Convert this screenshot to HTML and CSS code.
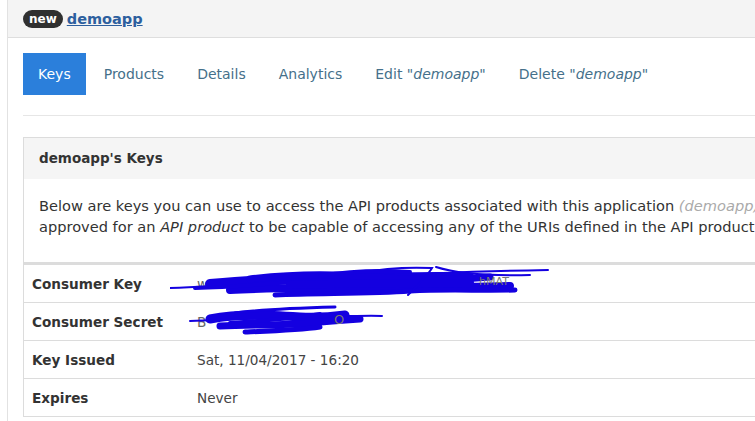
FILE: index.html
```html
<!DOCTYPE html>
<html>
<head>
<meta charset="utf-8">
<link rel="stylesheet" href="styles.css">
</head>
<body>
<div class="page">
  <div class="header">
    <span class="badge">new</span>
    <a class="title" href="#">demoapp</a>
  </div>
  <div class="content">
    <ul class="tabs">
      <li class="tab active">Keys</li>
      <li class="tab">Products</li>
      <li class="tab">Details</li>
      <li class="tab">Analytics</li>
      <li class="tab">Edit "<em>demoapp</em>"</li>
      <li class="tab">Delete "<em>demoapp</em>"</li>
    </ul>
    <div class="rule"></div>
    <div class="panel">
      <div class="panel-head">demoapp's Keys</div>
      <p class="panel-body">Below are keys you can use to access the API products associated with this application <em class="muted">(demoapp)</em>. The keys must be<br>approved for an <em>API product</em> to be capable of accessing any of the URIs defined in the API product.</p>
    </div>
    <table class="keys">
      <tr>
        <th>Consumer Key</th>
        <td class="secret">
          <span class="val">w</span>
          <svg class="scribble" width="380" height="36" viewBox="0 0 380 36">
            <g fill="none" stroke="#1400e0" stroke-linecap="round">
              <path d="M0 23 C60 21 140 16 200 12 S320 6 378 5" stroke-width="2"/>
              <path d="M40 19 C90 15 140 11 190 12 C230 14 270 10 300 13" stroke-width="10"/>
              <path d="M60 25 C110 22 160 24 210 22 C250 20 280 23 340 21" stroke-width="8"/>
              <path d="M80 14 C130 8 170 9 220 13 C250 16 280 15 320 12" stroke-width="7"/>
              <path d="M105 30 C150 28 200 29 240 26 C280 24 310 26 345 25" stroke-width="5"/>
              <path d="M25 23 C70 22 100 18 140 16" stroke-width="4"/>
              <path d="M120 20 C170 18 230 18 300 18" stroke-width="8"/>
              <path d="M190 8 C215 3 240 2 262 3 C258 10 250 18 238 30 M266 2 C285 8 320 11 360 10" stroke-width="2"/>
              <path d="M150 11 C180 6 210 5 240 7" stroke-width="4"/>
            </g>
          </svg>
          <span class="tail">hMAT</span>
        </td>
      </tr>
      <tr>
        <th>Consumer Secret</th>
        <td class="secret">
          <span class="val">B</span>
          <svg class="scribble" width="220" height="36" viewBox="0 0 220 36">
            <g fill="none" stroke="#1400e0" stroke-linecap="round">
              <path d="M20 18 C60 16 110 15 150 14 S200 12 212 13" stroke-width="2"/>
              <path d="M40 16 C70 10 100 12 130 14 C150 15 160 14 175 12" stroke-width="9"/>
              <path d="M50 23 C80 21 110 23 140 20 C160 18 175 17 190 16" stroke-width="7"/>
              <path d="M75 29 C100 28 130 27 150 24" stroke-width="5"/>
              <path d="M65 10 C95 6 125 5 165 4" stroke-width="3"/>
              <path d="M60 20 C90 18 120 16 150 11" stroke-width="4"/>
            </g>
          </svg>
          <span class="tail2">O</span>
        </td>
      </tr>
      <tr>
        <th>Key Issued</th>
        <td>Sat, 11/04/2017 - 16:20</td>
      </tr>
      <tr>
        <th>Expires</th>
        <td>Never</td>
      </tr>
    </table>
  </div>
</div>
</body>
</html>
```

FILE: styles.css
```css
html, body {
  margin: 0;
  padding: 0;
  background: #fff;
}
body {
  font-family: "DejaVu Sans", "Liberation Sans", sans-serif;
  font-size: 14px;
  color: #333;
  overflow: hidden;
  width: 755px;
  height: 421px;
}
.page {
  margin-left: 7px;
  border-left: 1px solid #e2e2e2;
  min-height: 421px;
  width: 1200px;
}
.header {
  height: 37px;
  background: #f4f4f4;
  border-bottom: 1px solid #dedede;
  padding-left: 15px;
  display: flex;
  align-items: center;
  gap: 4px;
}
.badge {
  background: #303030;
  color: #fff;
  font-weight: bold;
  font-size: 12px;
  border-radius: 9px;
  height: 18px;
  line-height: 18px;
  padding: 0 6px;
  margin-top: 1px;
}
.title {
  color: #2d5f9e;
  font-weight: bold;
  font-size: 14.5px;
  text-decoration: underline;
}
.content {
  padding-left: 15px;
}
.tabs {
  list-style: none;
  margin: 15px 0 0;
  padding: 0;
  display: flex;
  gap: 3px;
}
.tab {
  height: 42px;
  line-height: 42px;
  padding: 0 15px;
  color: #45708a;
  font-size: 14px;
}
.tab em {
  font-style: italic;
}
.tab.active {
  background: #2b7fdb;
  color: #fff;
}
.rule {
  height: 1px;
  background: #e6e6e6;
  margin-top: 20px;
}
.panel {
  margin-top: 21px;
  border: 1px solid #dcdcdc;
  border-bottom: none;
}
.panel-head {
  height: 41px;
  line-height: 41px;
  background: #f5f5f5;
  padding-left: 15px;
  font-weight: bold;
  font-size: 13.5px;
  color: #333;
}
.panel-body {
  margin: 0;
  padding: 16px 15px 25px;
  line-height: 21px;
  white-space: nowrap;
  font-size: 14.6px;
}
.panel-body .muted {
  color: #aaa;
}
.keys {
  border-collapse: collapse;
  width: 1000px;
  border-left: 1px solid #dcdcdc;
  border-top: 3px solid #dcdcdc;
}
.keys th, .keys td {
  height: 37px;
  border-bottom: 1px solid #dcdcdc;
  padding: 0 8px;
  text-align: left;
  font-size: 13.6px;
  white-space: nowrap;
}
.keys th {
  width: 149px;
  font-weight: bold;
  color: #333;
}
.keys td {
  color: #444;
  font-weight: normal;
}
.secret {
  position: relative;
}
.val {
  color: #666;
}
.tail {
  position: absolute;
  left: 290px;
  top: 10px;
  color: #777;
  font-size: 11px;
}
.tail2 {
  position: absolute;
  left: 145px;
  top: 9px;
  color: #777;
  font-size: 13px;
}
.scribble {
  position: absolute;
  left: -19px;
  top: 0;
}
```
